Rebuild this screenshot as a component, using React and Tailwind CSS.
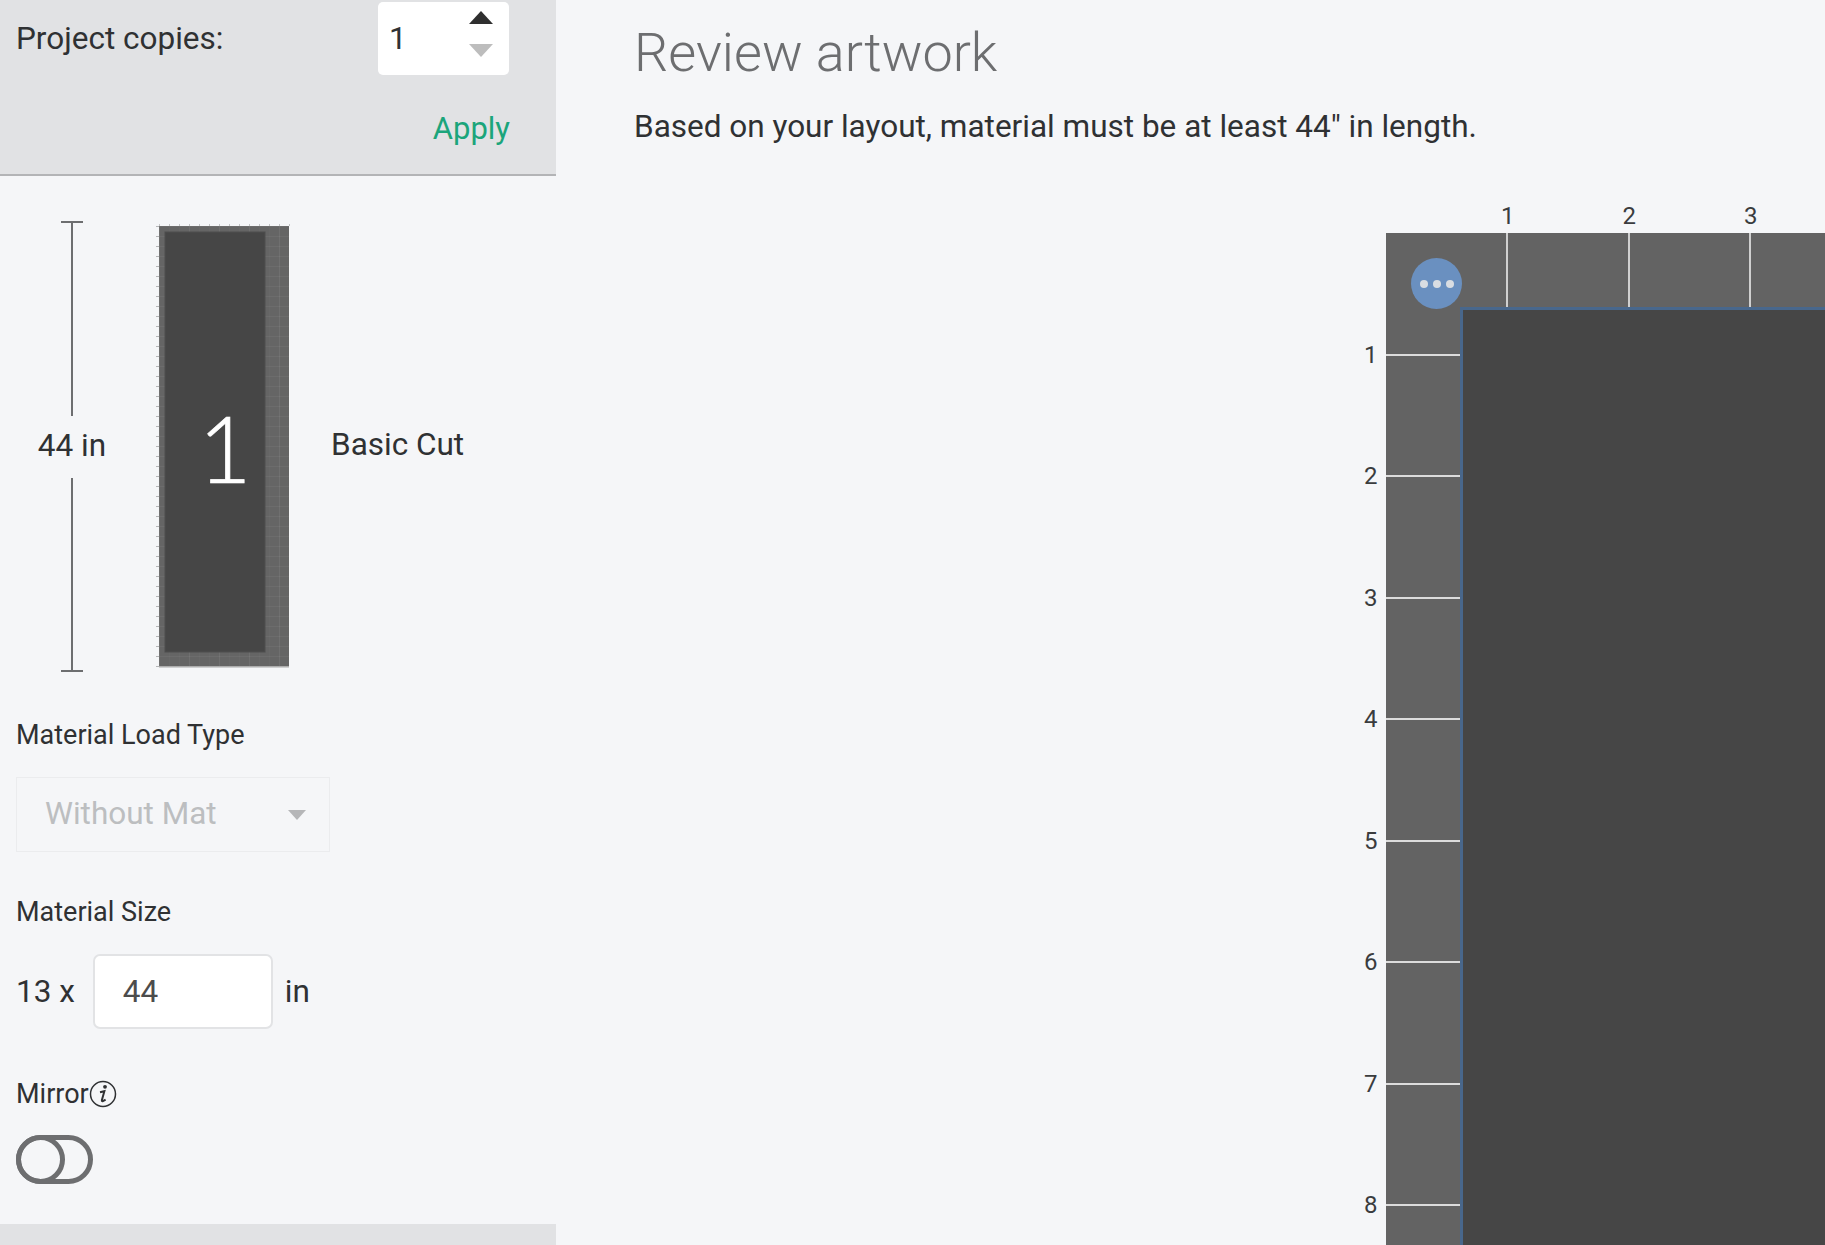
import React from "react";

const FONT = { fontFamily: "Roboto, sans-serif" };
const INCHES = [1, 2, 3, 4, 5, 6, 7, 8];

// small preview of the mat, 10px per inch
const MatThumb = () => {
  const xs = Array.from({ length: 14 }, (_, i) => i * 10);
  const ys = Array.from({ length: 45 }, (_, i) => i * 10);
  return (
    <svg width="138" height="446" viewBox="-5 -3 138 446" className="block">
      <rect x="0" y="0" width="130" height="440" fill="#656565" />
      <rect x="0" y="440" width="130" height="1.5" fill="#a9a9a9" />
      {xs.map((x) => (
        <g key={x}>
          <line x1={x + 0.5} y1="-2" x2={x + 0.5} y2="0" stroke="#c2c3c5" strokeWidth="1" />
          <line x1={x + 0.5} y1="0" x2={x + 0.5} y2="440" stroke="#ffffff" strokeOpacity={x % 30 === 0 ? 0.07 : 0.02} strokeWidth="1" />
        </g>
      ))}
      {ys.map((y) => (
        <g key={y}>
          <line x1="-3" y1={y + 0.5} x2="0" y2={y + 0.5} stroke="#b4b5b7" strokeWidth="1" />
          <line x1="0" y1={y + 0.5} x2="130" y2={y + 0.5} stroke="#ffffff" strokeOpacity="0.05" strokeWidth="1" />
        </g>
      ))}
      <rect x="6" y="6" width="100" height="420" fill="#464646" stroke="#4e4e4e" strokeWidth="1" />
    </svg>
  );
};

const Sidebar = () => (
  <div className="w-[556px] shrink-0 flex flex-col h-full text-[#2f3133]">
    {/* copies panel */}
    <div className="h-[176px] shrink-0 bg-[#e1e2e4] border-b-2 border-[#b3b4b6] pl-4 pr-[47px] pt-[2px]">
      <div className="flex items-center justify-between h-[73px]">
        <span className="text-[31.5px]">Project copies:</span>
        <div className="w-[131px] h-[73px] bg-white rounded-[5px] flex items-center justify-between pl-[11px] pr-4">
          <span className="text-[31.5px]">1</span>
          <div className="flex flex-col gap-[20px] pb-[9px]">
            <div className="w-0 h-0 border-x-[12px] border-x-transparent border-b-[13px] border-b-[#2f2f2f]" />
            <div className="w-0 h-0 border-x-[12px] border-x-transparent border-t-[13px] border-t-[#bdbdbd]" />
          </div>
        </div>
      </div>
      <div className="text-right text-[#1ba57b] text-[31px] mt-[30px] -mr-[1px] leading-[48px]">Apply</div>
    </div>

    {/* preview */}
    <div className="flex items-center mt-[45px] pl-[37px]">
      <div className="w-[70px] h-[451px] flex flex-col items-center">
        <div className="w-[22px] h-[2px] bg-[#6d6e70]" />
        <div className="w-[2px] flex-1 bg-[#6d6e70]" />
        <div className="text-[31.5px] leading-[60px] pb-[2px] whitespace-nowrap">44 in</div>
        <div className="w-[2px] flex-1 bg-[#6d6e70]" />
        <div className="w-[22px] h-[2px] bg-[#6d6e70]" />
      </div>
      <div className="relative ml-[47px] mb-[2px]">
        <MatThumb />
        <div
          className="absolute left-[15px] top-[11px] w-[112px] h-[428px] flex items-center justify-center text-white text-[92px] font-light [-webkit-text-stroke:0.7px_white]"
          style={{ fontFamily: "Lato, sans-serif" }}
        >
          1
        </div>
      </div>
      <div className="ml-[39px] mb-[4px] text-[31.5px]">Basic Cut</div>
    </div>

    {/* material settings */}
    <div className="pl-4 mt-[45px] text-[27px] leading-[36px]">Material Load Type</div>
    <div className="ml-4 mt-[24px] w-[314px] h-[75px] border border-[#ebecee] flex items-center justify-between pl-[28px] pr-[23px]">
      <span className="text-[31.5px] text-[#bcbec0] mb-[2px]">Without Mat</span>
      <div className="w-0 h-0 border-x-[9px] border-x-transparent border-t-[10px] border-t-[#b5b6b8]" />
    </div>
    <div className="pl-4 mt-[42px] text-[27px] leading-[36px]">Material Size</div>
    <div className="flex items-center pl-4 mt-[24px]">
      <span className="text-[31.5px]">13 x</span>
      <div className="ml-[18px] w-[180px] h-[75px] bg-white border-2 border-[#e2e3e5] rounded-[7px] flex items-center pl-[28px] text-[31.5px] text-[#4c4c4c]">
        44
      </div>
      <span className="ml-[12px] text-[31.5px]">in</span>
    </div>

    <div className="flex items-center pl-4 mt-[47px] text-[27px] leading-[36px]">
      Mirror
      <svg width="28" height="28" viewBox="0 0 28 28" className="shrink-0">
        <circle cx="14" cy="14" r="12.5" fill="none" stroke="#2f3133" strokeWidth="1.5" />
        <circle cx="16" cy="6.8" r="1.9" fill="#2f3133" />
        <path d="M11 12.2 L15.4 11.2 L12.9 20 Q12.6 21.6 14 21.1 L16.6 19.6" fill="none" stroke="#2f3133" strokeWidth="2" />
      </svg>
    </div>
    <div className="ml-4 mt-[23px] relative w-[77px] h-[49px] rounded-full border-[5px] border-[#6d6e70]">
      <div className="absolute -left-[5px] -top-[5px] w-[49px] h-[49px] rounded-full border-[5px] border-[#6d6e70]" />
    </div>

    <div className="mt-auto h-[21px] bg-[#e1e2e4]" />
  </div>
);

const Ruler = () => (
  <div className="flex mt-[53px] ml-[803px]">
    {/* left labels */}
    <div className="w-[27px] shrink-0 pt-[94px] pl-[5px]">
      {INCHES.map((n) => (
        <div key={n} className="h-[121.5px] flex items-center text-[24px] text-[#3a3c3e]">
          {n}
        </div>
      ))}
    </div>
    <div className="flex-1">
      {/* top labels */}
      <div className="h-[33px] flex pl-[61px] pb-[2px] items-center">
        {[1, 2, 3].map((n) => (
          <div key={n} className="w-[121.5px] shrink-0 text-center text-[24px] text-[#3a3c3e]">
            {n}
          </div>
        ))}
      </div>
      <div className="flex bg-[#636363] h-[1100px]">
        <div className="relative w-[74px] shrink-0 pt-[61px]">
          <div className="absolute left-[25px] top-[25px] w-[51px] h-[51px] rounded-full bg-[#6a90c0] flex items-center justify-center gap-[5px]">
            <div className="w-[8px] h-[8px] rounded-full bg-[#d9dde2]" />
            <div className="w-[8px] h-[8px] rounded-full bg-[#d9dde2]" />
            <div className="w-[8px] h-[8px] rounded-full bg-[#d9dde2]" />
          </div>
          {INCHES.map((n) => (
            <div key={n} className="h-[121.5px] flex items-center">
              <div className="w-full h-[2px] bg-[#dcdcdc]" />
            </div>
          ))}
        </div>
        <div className="flex-1 flex flex-col min-w-0">
          <div className="h-[74px] flex pl-[46px] shrink-0">
            {[1, 2, 3].map((n) => (
              <div key={n} className="w-[121.5px] shrink-0 border-l-2 border-[#d0d0d0]" />
            ))}
          </div>
          <div className="flex-1 bg-[#464646] border-l-[3px] border-t-[3px] border-[#48678c]" />
        </div>
      </div>
    </div>
  </div>
);

export default function App() {
  return (
    <div className="flex h-screen overflow-hidden bg-[#f5f6f8]" style={FONT}>
      <Sidebar />
      <div className="flex-1 min-w-0 overflow-hidden">
        <div className="pl-[78px] pt-[21px]">
          <h1 className="text-[54px] leading-[64px] font-light text-[#6d6e70]">Review artwork</h1>
          <p className="text-[31.5px] leading-[40px] mt-[22px] text-[#2f3133]">
            Based on your layout, material must be at least 44" in length.
          </p>
        </div>
        <Ruler />
      </div>
    </div>
  );
}
